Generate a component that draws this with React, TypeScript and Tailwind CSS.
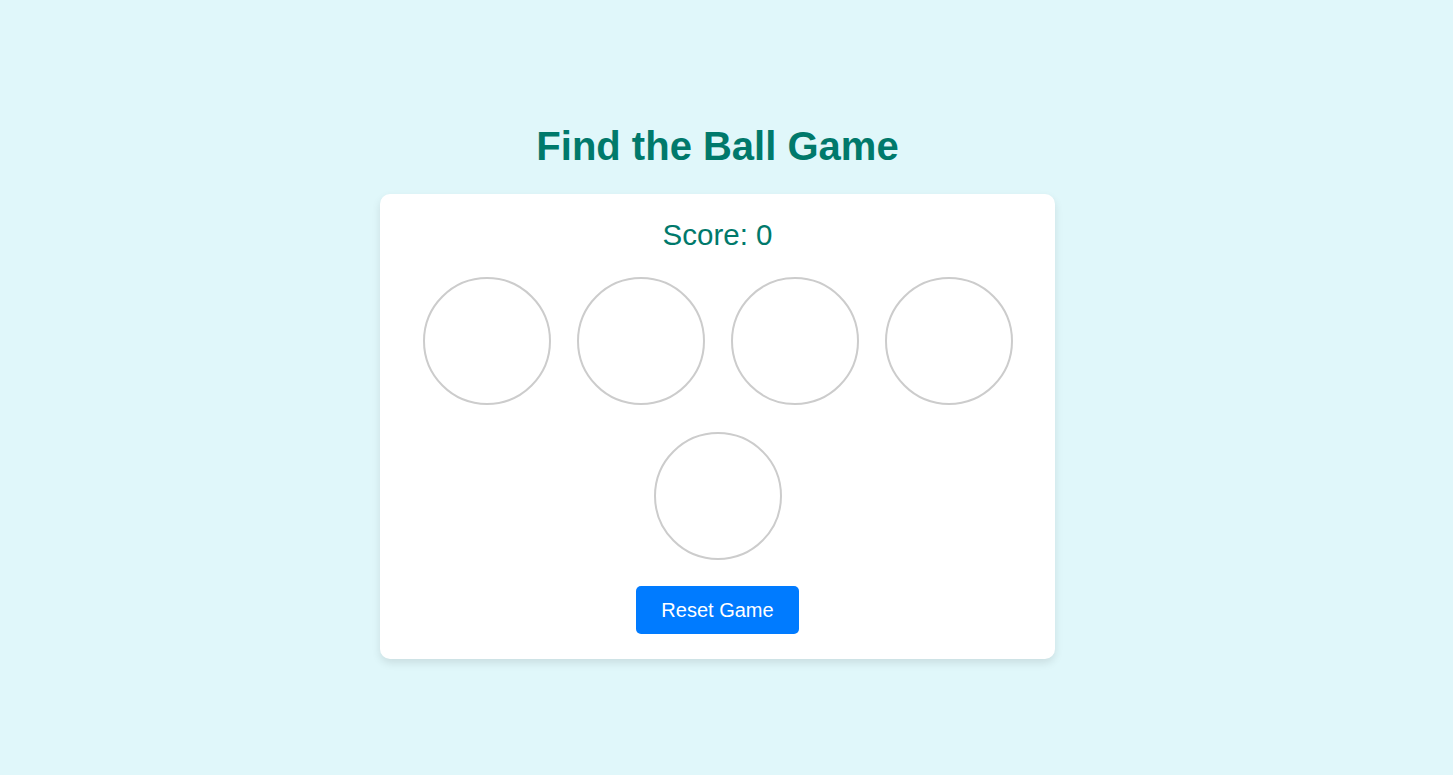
const balls = [0, 1, 2, 3, 4];

const App = () => {
  return (
    <div className="min-h-screen bg-[#e0f7fa] flex flex-col items-center pt-[123px] pr-[18px] font-['Liberation_Sans',Arial,sans-serif]">
      <h1 className="text-[40px] leading-[46px] font-bold text-[#00796b]">Find the Ball Game</h1>
      <div className="mt-[25px] w-[675px] bg-white rounded-[10px] shadow-[0_4px_8px_rgba(0,0,0,0.1)] px-5 pt-[25px] pb-[25px] flex flex-col items-center">
        <p className="text-[29.5px] leading-8 text-[#00796b]">Score: 0</p>
        <div className="mt-[26px] flex flex-wrap justify-center gap-x-[26px] gap-y-[27px]">
          {balls.map((b) => (
            <div
              key={b}
              className="w-32 h-32 rounded-full border-2 border-[#cccccc] bg-white cursor-pointer"
            />
          ))}
        </div>
        <button className="mt-[26px] h-12 px-[25px] rounded-[5px] bg-[#007bff] text-white text-[20px] leading-[23px]">
          Reset Game
        </button>
      </div>
    </div>
  );
};

export default App;
